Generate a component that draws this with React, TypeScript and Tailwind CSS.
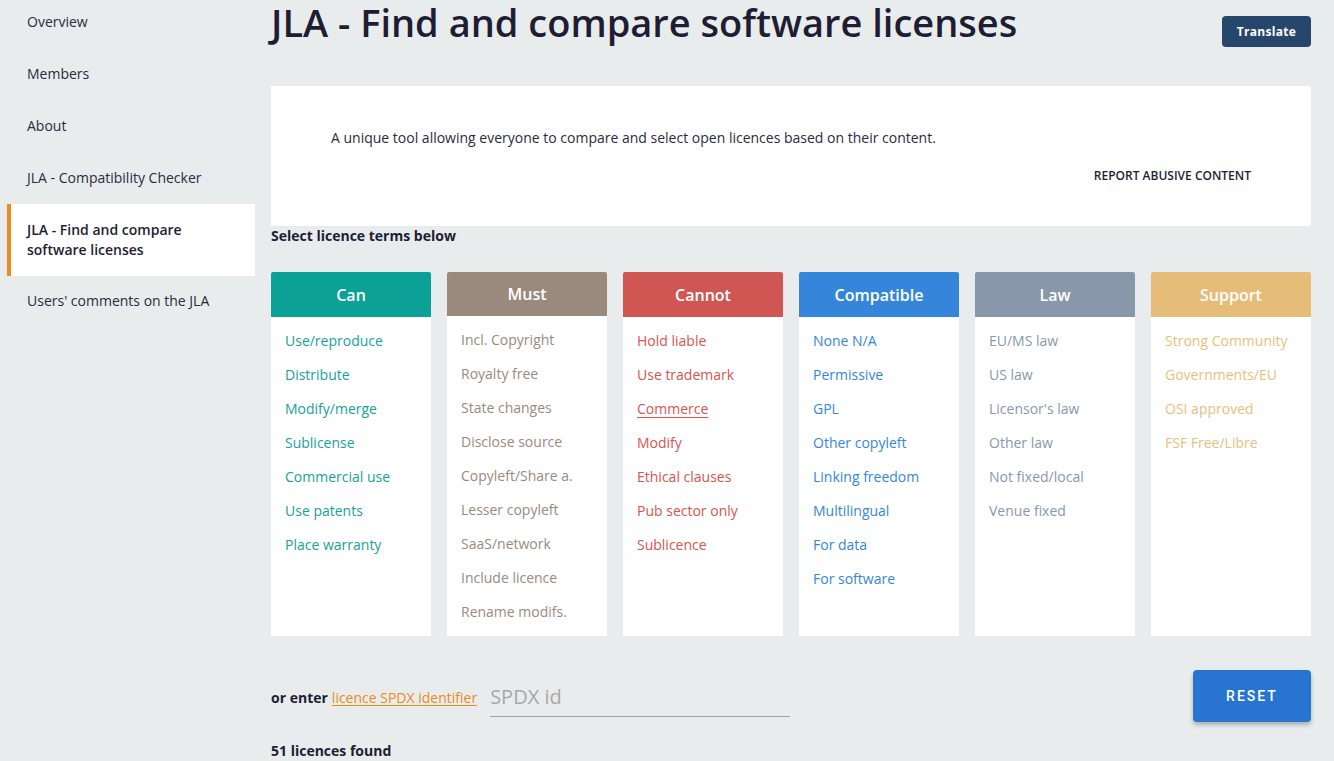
import React from "react";

const cols = [
  { title: "Can", head: "bg-[#0ba197]", text: "text-[#17a199]", items: ["Use/reproduce", "Distribute", "Modify/merge", "Sublicense", "Commercial use", "Use patents", "Place warranty"] },
  { title: "Must", head: "bg-[#9a8a7e]", text: "text-[#9a8a7e]", items: ["Incl. Copyright", "Royalty free", "State changes", "Disclose source", "Copyleft/Share a.", "Lesser copyleft", "SaaS/network", "Include licence", "Rename modifs."] },
  { title: "Cannot", head: "bg-[#d05654]", text: "text-[#d9534f]", items: ["Hold liable", "Use trademark", "Commerce", "Modify", "Ethical clauses", "Pub sector only", "Sublicence"] },
  { title: "Compatible", head: "bg-[#3586db]", text: "text-[#3586db]", items: ["None N/A", "Permissive", "GPL", "Other copyleft", "Linking freedom", "Multilingual", "For data", "For software"] },
  { title: "Law", head: "bg-[#8898aa]", text: "text-[#8898aa]", items: ["EU/MS law", "US law", "Licensor's law", "Other law", "Not fixed/local", "Venue fixed"] },
  { title: "Support", head: "bg-[#e6bd78]", text: "text-[#e8c07d]", items: ["Strong Community", "Governments/EU", "OSI approved", "FSF Free/Libre"] },
];

const nav = ["Overview", "Members", "About", "JLA - Compatibility Checker"];

export default function App() {
  return (
    <div className="w-[1334px] h-[761px] overflow-hidden bg-[#e8ecec] flex font-['Open_Sans',sans-serif] text-[#2b2b3d]">
      <aside className="w-[255px] shrink-0 flex flex-col pl-[7px] pt-[12px]">
        {nav.map((n) => (
          <div key={n} className="h-[20px] leading-[20px] mb-[32px] pl-[20px] text-[14px]">{n}</div>
        ))}
        <div className="-mt-[16px] h-[72px] bg-white border-l-4 border-[#ee8a1e] flex items-center pl-[16px] text-[14px] font-semibold leading-[20px] text-[#1f1d33]">
          JLA - Find and compare<br />software licenses
        </div>
        <div className="mt-[15px] h-[20px] leading-[20px] pl-[20px] text-[14px]">Users' comments on the JLA</div>
      </aside>
      <main className="ml-[16px] w-[1040px] flex flex-col">
        <div className="flex items-start justify-between h-[86px] shrink-0">
          <h1 className="text-[38px] font-semibold leading-[44px] whitespace-nowrap shrink-0 text-[#1f1d33]">JLA - Find and compare software licenses</h1>
          <button className="mt-[16px] h-[31px] w-[89px] shrink-0 rounded-[4px] bg-[#27466b] text-white text-[12px] font-bold tracking-[0.3px]">Translate</button>
        </div>
        <div className="bg-white h-[140px] shrink-0 flex flex-col pl-[60px] pr-[60px] pt-[42px]">
          <p className="text-[14px] leading-[20px]">A unique tool allowing everyone to compare and select open licences based on their content.</p>
          <p className="self-end mt-[20px] text-[12px] leading-[16px] font-semibold text-[#1f1d33]">REPORT ABUSIVE CONTENT</p>
        </div>
        <div className="text-[14px] font-bold leading-[20px] text-[#1f1d33]">Select licence terms below</div>
        <div className="mt-[26px] grid grid-cols-6 gap-[16px]">
          {cols.map((c) => (
            <div key={c.title} className="bg-white h-[364px] flex flex-col rounded-t-[2px]">
              <div className={`${c.head} h-[45px] flex items-center justify-center text-white text-[16px] font-semibold rounded-t-[2px]`}>{c.title}</div>
              <div className="flex flex-col pt-[14px] pl-[14px]">
                {c.items.map((it) => (
                  <div key={it} className={`${c.text} text-[14px] h-[34px] leading-[20px] ${it === "Commerce" ? "underline underline-offset-[3px]" : ""}`}>{it}</div>
                ))}
              </div>
            </div>
          ))}
        </div>
        <div className="mt-[34px] flex items-center justify-between">
          <div className="flex items-center mt-[3px]">
            <span className="text-[14px] font-bold text-[#1f1d33]">or enter</span>
            <span className="ml-[4px] text-[14px] text-[#ee8a1e] underline underline-offset-[2px]">licence SPDX identifier</span>
            <div className="ml-[13px] w-[300px] border-b border-[#a0a0a0] h-[38px] flex items-center">
              <span className="text-[20px] text-[#a8a8a8]">SPDX id</span>
            </div>
          </div>
          <button className="w-[118px] h-[52px] rounded-[4px] bg-[#2775d0] text-white text-[14px] font-medium tracking-[2px] shadow-[0_3px_4px_rgba(0,0,0,0.25)] font-['Roboto',sans-serif]">RESET</button>
        </div>
        <div className="mt-[18px] text-[14px] font-bold text-[#1f1d33]">51 licences found</div>
      </main>
    </div>
  );
}
